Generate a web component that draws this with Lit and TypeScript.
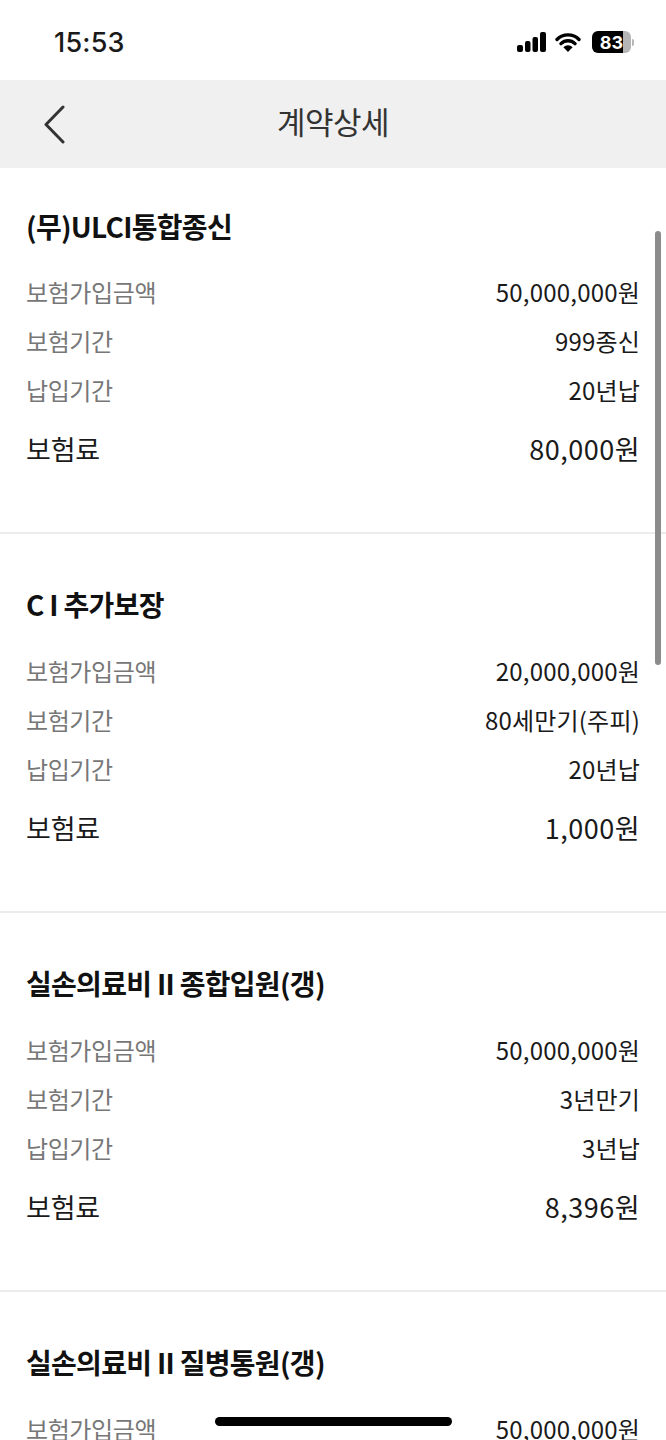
import { css, html, LitElement } from 'lit';
import { customElement } from 'lit/decorators.js';

interface Contract {
  name: string;
  amount: string;
  term: string;
  payment?: string;
  premium?: string;
}

const CONTRACTS: Contract[] = [
  { name: '(무)ULCI통합종신', amount: '50,000,000원', term: '999종신', payment: '20년납', premium: '80,000원' },
  { name: 'C I 추가보장', amount: '20,000,000원', term: '80세만기(주피)', payment: '20년납', premium: '1,000원' },
  { name: '실손의료비 II 종합입원(갱)', amount: '50,000,000원', term: '3년만기', payment: '3년납', premium: '8,396원' },
  { name: '실손의료비 II 질병통원(갱)', amount: '50,000,000원', term: '3년만기', payment: '3년납', premium: '8,396원' },
];

@customElement('app-root')
export class AppRoot extends LitElement {

  renderStatusBar () {
    return html`
      <div class="status">
        <span class="time">15:53</span>
        <div class="status-icons">
          <svg width="29" height="20" viewBox="0 0 29 20">
            <rect x="0" y="13" width="6" height="7" rx="2" fill="#000"/>
            <rect x="8" y="9" width="5.5" height="11" rx="2" fill="#000"/>
            <rect x="15.5" y="5" width="5.5" height="15" rx="2" fill="#000"/>
            <rect x="23" y="0" width="6" height="20" rx="2" fill="#000"/>
          </svg>
          <svg width="26" height="20" viewBox="0 0 26 20">
            <path d="M2 7.5a15.5 15.5 0 0 1 22 0M6 11.6a10 10 0 0 1 14 0" fill="none" stroke="#000" stroke-width="3.4" stroke-linecap="round"/>
            <path d="M13 20l-4.6-4.7a6.4 6.4 0 0 1 9.2 0z" fill="#000"/>
          </svg>
          <div class="battery">
            <div class="battery-body"><span>83</span></div>
            <div class="battery-cap"></div>
          </div>
        </div>
      </div>
    `;
  }

  renderContract (c: Contract) {
    return html`
      <section class="contract">
        <h2>${c.name}</h2>
        <div class="rows">
          <div class="row"><span class="label">보험가입금액</span><span class="value">${c.amount}</span></div>
          <div class="row"><span class="label">보험기간</span><span class="value">${c.term}</span></div>
          <div class="row"><span class="label">납입기간</span><span class="value">${c.payment}</span></div>
        </div>
        <div class="row premium"><span class="premium-label">보험료</span><span class="premium-value">${c.premium}</span></div>
      </section>
    `;
  }

  render () {
    return html`
      ${this.renderStatusBar()}
      <header class="nav">
        <svg class="back" width="24" height="40" viewBox="0 0 24 40">
          <path d="M21 3L4 20.5 21 38" fill="none" stroke="#333" stroke-width="3" stroke-linecap="round" stroke-linejoin="round"/>
        </svg>
        <h1>계약상세</h1>
      </header>
      <main>
        ${CONTRACTS.map((c) => this.renderContract(c))}
      </main>
      <div class="scrollbar"></div>
      <div class="home"></div>
    `;
  }

  static styles = css`
    :host {
      background: #fff;
      color: #1a1a1a;
      display: block;
      font-family: "Noto Sans CJK KR", "Noto Sans", sans-serif;
      height: 1440px;
      overflow: hidden;
      position: relative;
      width: 666px;
    }

    .status {
      align-items: center;
      box-sizing: border-box;
      display: flex;
      height: 80px;
      justify-content: space-between;
      padding: 4px 32px 0 54px;
    }

    .time {
      color: #1a1a1a;
      font-family: Inter, sans-serif;
      font-size: 27px;
      font-weight: 500;
      letter-spacing: 0.2px;
    }

    .status-icons {
      align-items: center;
      display: flex;
      gap: 9px;
    }

    .battery {
      align-items: center;
      display: flex;
      gap: 1px;
      margin-left: 2px;
    }

    .battery-body {
      align-items: center;
      background: linear-gradient(90deg, #000 80%, #b5b5b5 80%);
      border-radius: 6px;
      box-sizing: border-box;
      color: #fff;
      display: flex;
      font-family: Inter, sans-serif;
      font-size: 18px;
      font-weight: 700;
      height: 22px;
      justify-content: center;
      width: 39px;
    }

    .battery-cap {
      background: #b5b5b5;
      border-radius: 0 2px 2px 0;
      height: 7px;
      width: 2px;
    }

    .nav {
      align-items: center;
      background: #f0f0f0;
      display: flex;
      height: 88px;
      justify-content: center;
      position: relative;
    }

    .back {
      left: 42px;
      position: absolute;
      top: 24px;
    }

    h1 {
      color: #333;
      font-size: 31px;
      font-weight: 400;
      letter-spacing: -0.5px;
      line-height: 40px;
      margin: 0 0 6px;
    }

    .contract {
      border-bottom: 2px solid #ececec;
      box-sizing: border-box;
      display: flex;
      flex-direction: column;
      height: 379px;
      padding: 35px 26px 0;
    }

    .contract:first-child {
      height: 366px;
      padding-top: 23px;
    }

    h2 {
      color: #111;
      font-size: 28px;
      font-weight: 700;
      letter-spacing: -0.7px;
      line-height: 70px;
      margin: 0 0 14px;
    }

    .contract:first-child h2 {
      margin-bottom: 13px;
    }

    .rows {
      display: flex;
      flex-direction: column;
      gap: 15.4px;
    }

    .row {
      align-items: center;
      color: #1a1a1a;
      display: flex;
      font-size: 24px;
      height: 34px;
      justify-content: space-between;
    }

    .label {
      color: #777;
      letter-spacing: -0.4px;
    }

    .value {
      letter-spacing: 0.2px;
    }

    .premium {
      font-size: 27px;
      margin-top: 25px;
    }

    .premium-label {
      letter-spacing: -0.2px;
    }

    .premium-value {
      letter-spacing: 0.5px;
    }

    .scrollbar {
      background: #8b8b8b;
      border-radius: 3px;
      height: 434px;
      left: 655px;
      position: absolute;
      top: 231px;
      width: 6px;
    }

    .home {
      background: #000;
      border-radius: 5px;
      height: 9px;
      left: 215px;
      position: absolute;
      top: 1417px;
      width: 237px;
    }
  `;
}
